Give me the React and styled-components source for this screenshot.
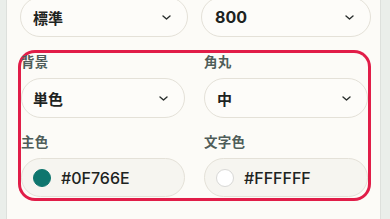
import styled, { createGlobalStyle } from 'styled-components'

const GlobalStyle = createGlobalStyle`
	body {
		margin: 0;
		background: #eaeeea;
		font-family: Inter, "Noto Sans CJK JP", sans-serif;
		overflow: hidden;
	}
`

const Panel = styled.div`
	margin-left: 6px;
	width: 375px;
	height: 219px;
	box-sizing: border-box;
	background: #fcfbf7;
	border-left: 1px solid #dde0dc;
	border-right: 1px solid #dde0dc;
	padding: 0 12px 0 13px;
	overflow: hidden;
`

const TopRow = styled.div`
	display: grid;
	grid-template-columns: 168px 170px;
	column-gap: 13px;
	margin-top: -3px;
`

const Highlight = styled.section`
	display: grid;
	grid-template-columns: 164px 164px;
	column-gap: 19px;
	row-gap: 15px;
	margin: 16px 0 0 1px;
	width: 347px;
	padding-bottom: 1px;
	border-radius: 14px;
	box-shadow: 0 0 0 3px #e11d48;
`

const Field = styled.div`
	display: flex;
	flex-direction: column;
	gap: 7px;
`

const Label = styled.label`
	font-size: 13.5px;
	line-height: 18px;
	font-weight: 700;
	color: #4f5d59;
	letter-spacing: 0.3px;
`

const Select = styled.div`
	display: flex;
	align-items: center;
	justify-content: space-between;
	height: 40px;
	box-sizing: border-box;
	padding: 0 ${(p) => p.$right || 16}px 0 ${(p) => p.$left || 11}px;
	border: 1px solid #e4e1d8;
	border-radius: 20px;
	background: #fdfcf9;
	font-size: ${(p) => (p.$latin ? 16 : 15)}px;
	font-weight: 700;
	color: #1d2321;
`

const Chevron = () => (
	<svg width="9" height="5" viewBox="0 0 9 5" fill="none">
		<path d="M1 1l3.5 3 3.5-3" stroke="#2a2f2d" strokeWidth="1.4" strokeLinecap="round" strokeLinejoin="round" />
	</svg>
)

const ColorInput = styled.div`
	display: flex;
	align-items: center;
	gap: 10px;
	height: 39px;
	box-sizing: border-box;
	padding-left: 11px;
	border: 1px solid #e4e1d8;
	border-radius: 20px;
	background: #f6f5f0;
	font-size: 16px;
	font-weight: 500;
	color: #1d2321;
`

const Swatch = styled.span`
	width: 18px;
	height: 18px;
	border-radius: 50%;
	box-sizing: border-box;
	background: ${(p) => p.$color};
	border: 1px solid ${(p) => (p.$color === '#FFFFFF' ? '#d8d8d6' : p.$color)};
`

function App() {
	return (
		<>
			<GlobalStyle />
			<Panel>
				<TopRow>
					<Select $left={12}>
						標準
						<Chevron />
					</Select>
					<Select $latin $left={13} $right={16}>
						800
						<Chevron />
					</Select>
				</TopRow>
				<Highlight>
					<Field>
						<Label>背景</Label>
						<Select>
							単色
							<Chevron />
						</Select>
					</Field>
					<Field>
						<Label>角丸</Label>
						<Select $left={12}>
							中
							<Chevron />
						</Select>
					</Field>
					<Field>
						<Label>主色</Label>
						<ColorInput>
							<Swatch $color="#0F766E" />
							#0F766E
						</ColorInput>
					</Field>
					<Field>
						<Label>文字色</Label>
						<ColorInput>
							<Swatch $color="#FFFFFF" />
							#FFFFFF
						</ColorInput>
					</Field>
				</Highlight>
			</Panel>
		</>
	)
}

export default App
